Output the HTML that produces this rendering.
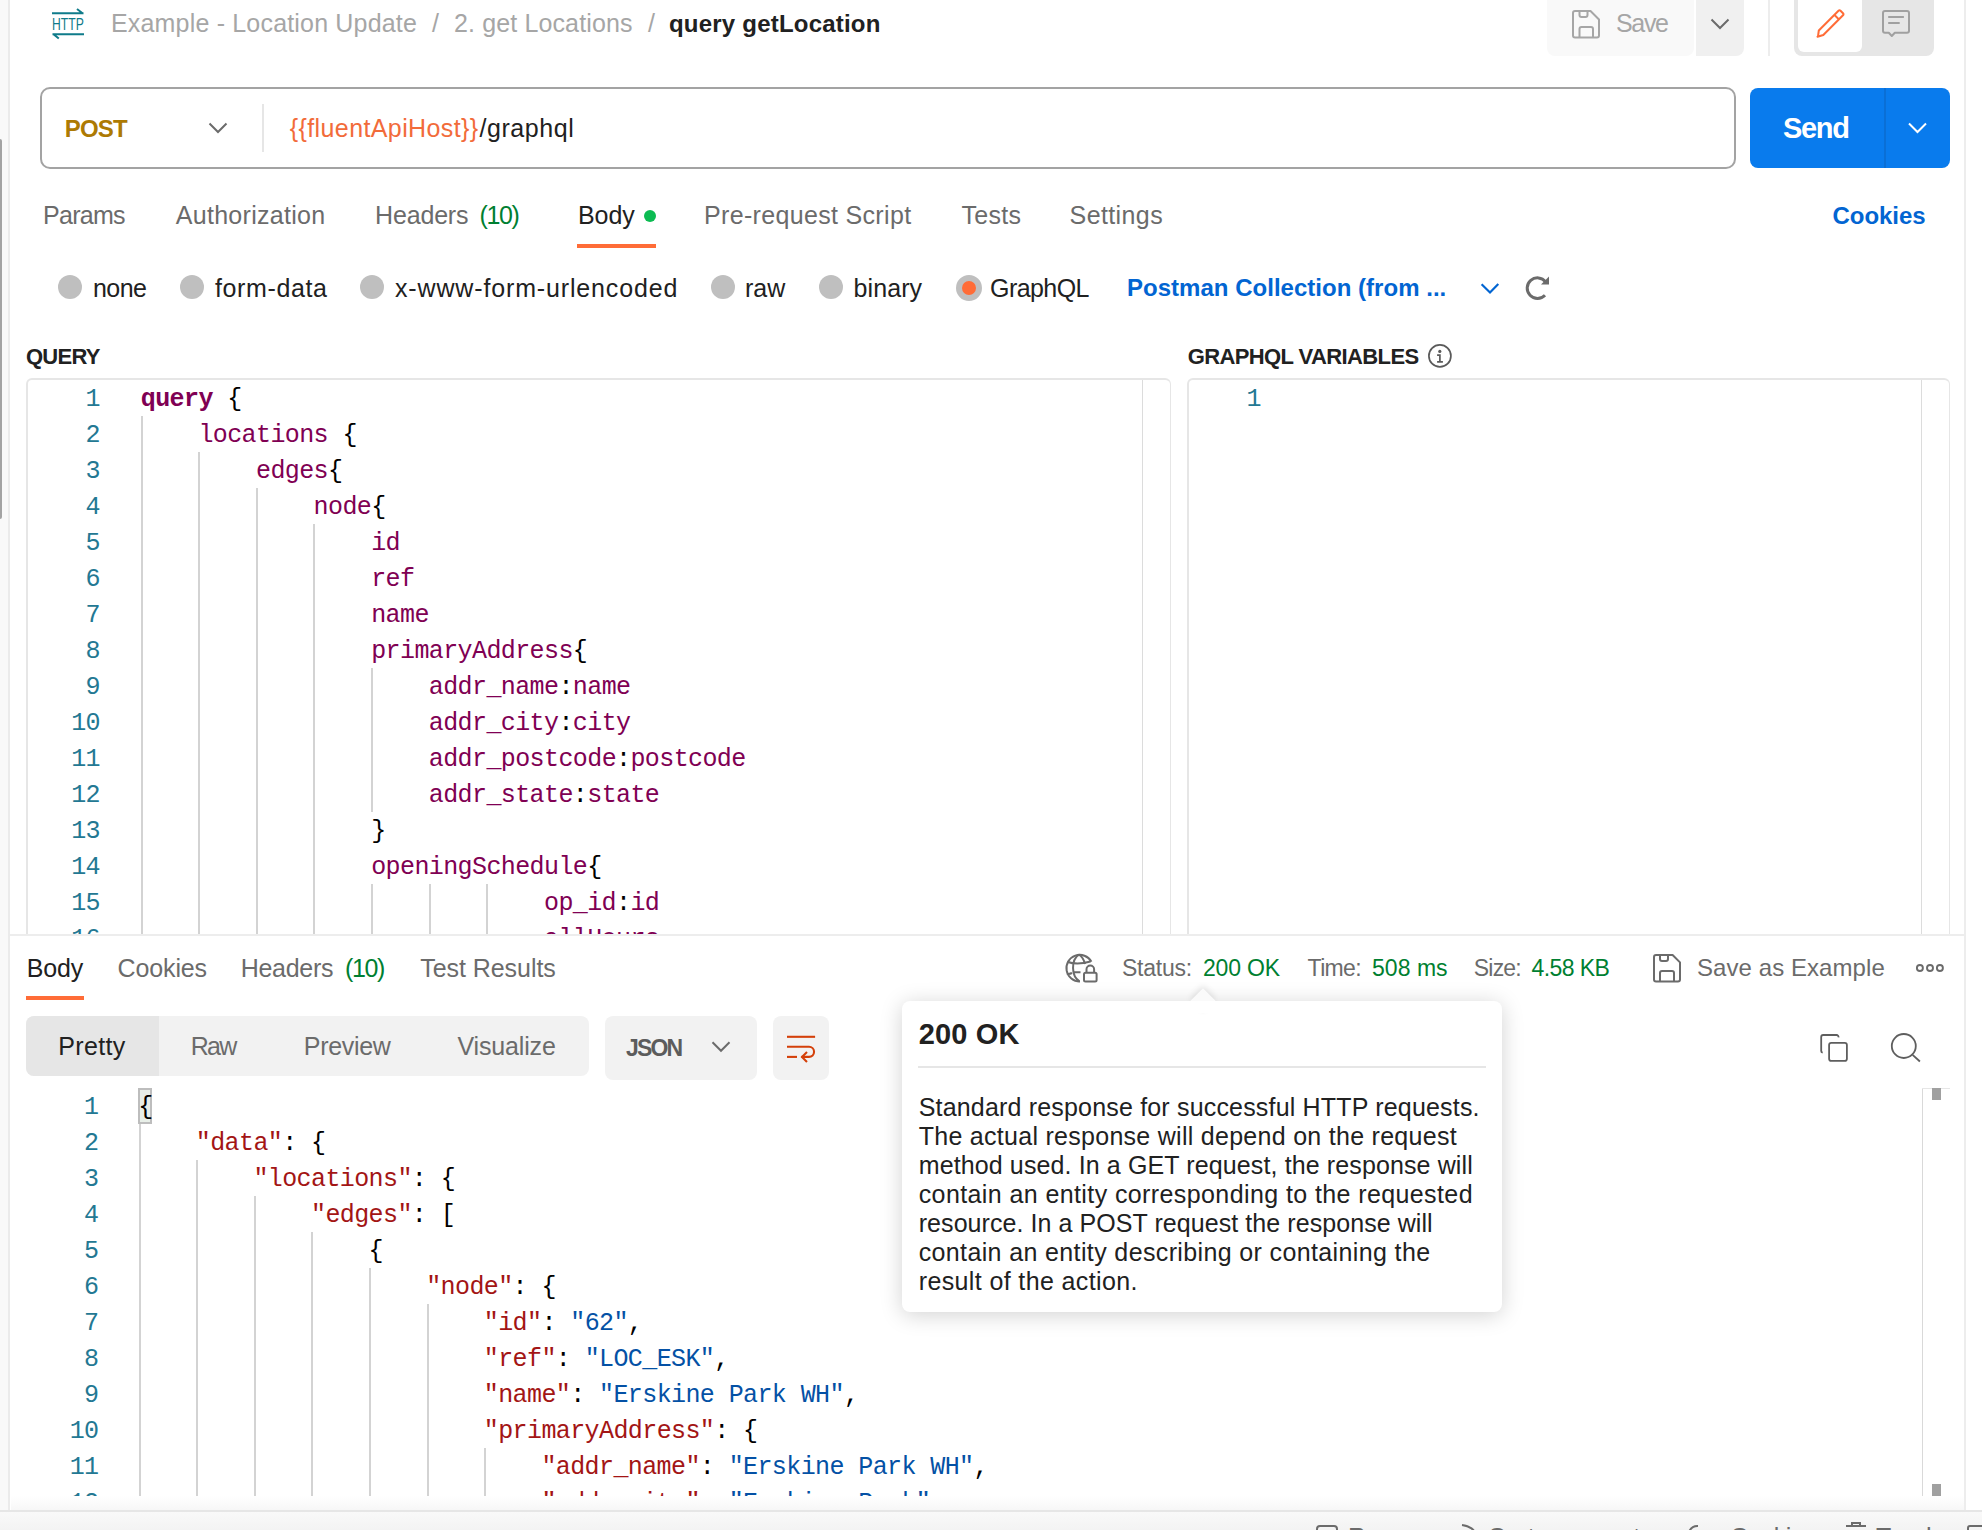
<!DOCTYPE html>
<html><head><meta charset="utf-8">
<style>
*{box-sizing:border-box;margin:0;padding:0}
html,body{width:1982px;height:1530px;overflow:hidden;background:#fff}
body{position:relative;font-family:"Liberation Sans",sans-serif;color:#212121}
.a{position:absolute}
.t{position:absolute;line-height:0;white-space:pre}
svg{position:absolute;overflow:visible}
.m{position:absolute;line-height:0;white-space:pre;font-family:"Liberation Mono",monospace}
</style></head><body>
<div class="a" style="left:0px;top:0px;width:8px;height:1530px;background:#f9f9f9;"></div>
<div class="a" style="left:8px;top:0px;width:2px;height:1530px;background:#ebebeb;"></div>
<div class="a" style="left:0px;top:139px;width:2px;height:380px;background:#a3a3a3;border-radius:0 2px 2px 0"></div>
<div class="a" style="left:1964px;top:0px;width:2px;height:1511px;background:#ededed;"></div>
<div class="a" style="left:1966px;top:0px;width:16px;height:1511px;background:#ffffff;"></div>
<svg style="left:0;top:0" width="100" height="50">
<g fill="none" stroke="#0f7b8a" stroke-width="2">
<path d="M52 13.3H83.5M77 9L82.5 13.3"/>
<path d="M52.5 34.2H84M53.5 34.2L58.8 38.6"/>
</g></svg>
<svg style="left:0;top:0" width="100" height="50"><text x="52" y="30.4" textLength="31.8" lengthAdjust="spacingAndGlyphs" font-family="Liberation Sans" font-size="17.4" fill="#0f7b8a">HTTP</text></svg>
<div class="t" style="left:111.0px;top:23.3px;font-size:25px;color:#a6a6a6;letter-spacing:0.18px">Example - Location Update</div>
<div class="t" style="left:432.0px;top:23.3px;font-size:25px;color:#a6a6a6;letter-spacing:0.00px">/</div>
<div class="t" style="left:454.0px;top:23.3px;font-size:25px;color:#a6a6a6;letter-spacing:0.13px">2. get Locations</div>
<div class="t" style="left:648.0px;top:23.3px;font-size:25px;color:#a6a6a6;letter-spacing:0.00px">/</div>
<div class="t" style="left:669.0px;top:23.7px;font-size:24px;color:#212121;letter-spacing:0.21px;font-weight:bold">query getLocation</div>
<div class="a" style="left:1547px;top:-8px;width:147px;height:64px;background:#f9f9f9;border-radius:8px"></div>
<div class="a" style="left:1696px;top:-8px;width:48px;height:64px;background:#f0f0f0;border-radius:0 8px 8px 0"></div>
<svg style="left:1564px;top:1px" width="50" height="50"><g fill="none" stroke="#a6a6a6" stroke-width="2" stroke-linejoin="round">
<path d="M11 10H26.5L35 18.5V34.6A2 2 0 0 1 33 36.6H11A2 2 0 0 1 9 34.6V12A2 2 0 0 1 11 10Z"/>
<path d="M15.5 10V14A2 2 0 0 0 17.5 16H21.5A2 2 0 0 0 23.5 14V10"/>
<path d="M15.5 36.6V28A2 2 0 0 1 17.5 26H27A2 2 0 0 1 29 28V36.6"/>
</g></svg>
<div class="t" style="left:1616.0px;top:23.3px;font-size:25px;color:#a6a6a6;letter-spacing:-1.33px">Save</div>
<svg style="left:1700px;top:0" width="40" height="50"><path d="M11.5 19.5L20 28L28.5 19.5" fill="none" stroke="#6b6b6b" stroke-width="2"/></svg>
<div class="a" style="left:1768px;top:0px;width:2px;height:56px;background:#ededed;"></div>
<div class="a" style="left:1794px;top:-8px;width:140px;height:64px;background:#e6e6e6;border-radius:8px"></div>
<div class="a" style="left:1798px;top:-8px;width:64px;height:60px;background:#ffffff;border-radius:6px"></div>
<svg style="left:1800px;top:0" width="60" height="50"><g fill="none" stroke="#ff6c37" stroke-width="2" stroke-linejoin="round">
<path d="M18 36.5L18.8 30.5L38.5 10.8Q39.5 9.8 40.5 10.8L43 13.3Q44 14.3 43 15.3L23.3 35L17.5 36.7Z"/>
<path d="M34.5 15L39 19.5"/>
</g></svg>
<svg style="left:1870px;top:0" width="50" height="50"><g fill="none" stroke="#a0a0a0" stroke-width="2" stroke-linejoin="round">
<path d="M15 11H37A2 2 0 0 1 39 13V30.8A2 2 0 0 1 37 32.8H24.8L21.8 36L18.8 32.8H15A2 2 0 0 1 13 30.8V13A2 2 0 0 1 15 11Z"/>
<path d="M18.2 17H33.9M18.2 23H29.7"/>
</g></svg>
<div class="a" style="left:40px;top:87px;width:1696px;height:82px;background:#fff;border:2px solid #a3a3a3;border-radius:10px"></div>
<div class="t" style="left:64.8px;top:128.7px;font-size:24px;color:#ad7a03;letter-spacing:-0.80px;font-weight:bold">POST</div>
<svg style="left:200px;top:110px" width="40" height="40"><path d="M9.5 13.5L18 22L26.5 13.5" fill="none" stroke="#6b6b6b" stroke-width="2"/></svg>
<div class="a" style="left:262px;top:104px;width:2px;height:48px;background:#e6e6e6;"></div>
<div class="t" style="left:289.8px;top:128.3px;font-size:25px;color:#f26b3a;letter-spacing:0.39px">{{fluentApiHost}}</div>
<div class="t" style="left:479.5px;top:128.3px;font-size:25px;color:#212121;letter-spacing:0.56px">/graphql</div>
<div class="a" style="left:1750px;top:88px;width:200px;height:80px;background:#097bed;border-radius:8px"></div>
<div class="a" style="left:1884px;top:88px;width:2px;height:80px;background:#0a6fd6;"></div>
<div class="t" style="left:1783.0px;top:128.0px;font-size:29px;color:#ffffff;letter-spacing:-1.33px;font-weight:bold">Send</div>
<svg style="left:1900px;top:110px" width="40" height="40"><path d="M9 13.5L17.5 22L26 13.5" fill="none" stroke="#ffffff" stroke-width="2"/></svg>
<div class="t" style="left:43.1px;top:215.3px;font-size:25px;color:#6b6b6b;letter-spacing:-0.74px">Params</div>
<div class="t" style="left:175.8px;top:215.3px;font-size:25px;color:#6b6b6b;letter-spacing:0.28px">Authorization</div>
<div class="t" style="left:375.1px;top:215.3px;font-size:25px;color:#6b6b6b;letter-spacing:-0.18px">Headers</div>
<div class="t" style="left:479.5px;top:215.3px;font-size:25px;color:#007f31;letter-spacing:-1.37px">(10)</div>
<div class="t" style="left:578.0px;top:215.3px;font-size:25px;color:#212121;letter-spacing:-0.07px">Body</div>
<div class="a" style="left:644px;top:210px;width:12px;height:12px;border-radius:6px;background:#0cbb52"></div>
<div class="a" style="left:577px;top:244px;width:79px;height:4px;background:#ff6c37;"></div>
<div class="t" style="left:704.0px;top:215.3px;font-size:25px;color:#6b6b6b;letter-spacing:0.33px">Pre-request Script</div>
<div class="t" style="left:961.6px;top:215.3px;font-size:25px;color:#6b6b6b;letter-spacing:0.25px">Tests</div>
<div class="t" style="left:1069.6px;top:215.3px;font-size:25px;color:#6b6b6b;letter-spacing:0.39px">Settings</div>
<div class="t" style="left:1832.5px;top:215.7px;font-size:24px;color:#0265d2;letter-spacing:-0.05px;font-weight:bold">Cookies</div>
<div class="a" style="left:58px;top:275px;width:24px;height:24px;border-radius:12px;background:#bfbfbf"></div>
<div class="a" style="left:180px;top:275px;width:24px;height:24px;border-radius:12px;background:#bfbfbf"></div>
<div class="a" style="left:360px;top:275px;width:24px;height:24px;border-radius:12px;background:#bfbfbf"></div>
<div class="a" style="left:711px;top:275px;width:24px;height:24px;border-radius:12px;background:#bfbfbf"></div>
<div class="a" style="left:819px;top:275px;width:24px;height:24px;border-radius:12px;background:#bfbfbf"></div>
<div class="a" style="left:956px;top:275px;width:26px;height:26px;border-radius:13px;background:#ff6c37;border:6px solid #bfbfbf"></div>
<div class="t" style="left:92.9px;top:287.6px;font-size:25px;color:#212121;letter-spacing:-0.50px">none</div>
<div class="t" style="left:215.0px;top:287.6px;font-size:25px;color:#212121;letter-spacing:0.62px">form-data</div>
<div class="t" style="left:395.0px;top:287.6px;font-size:25px;color:#212121;letter-spacing:0.85px">x-www-form-urlencoded</div>
<div class="t" style="left:745.0px;top:287.6px;font-size:25px;color:#212121;letter-spacing:0.00px">raw</div>
<div class="t" style="left:853.5px;top:287.6px;font-size:25px;color:#212121;letter-spacing:0.10px">binary</div>
<div class="t" style="left:990.0px;top:287.6px;font-size:25px;color:#212121;letter-spacing:-0.57px">GraphQL</div>
<div class="t" style="left:1127.0px;top:288.0px;font-size:24px;color:#0265d2;letter-spacing:0.02px;font-weight:bold">Postman Collection (from ...</div>
<svg style="left:1470px;top:265px" width="40" height="40"><path d="M11.6 19.3L20 27.5L28.3 19" fill="none" stroke="#0265d2" stroke-width="2.2"/></svg>
<svg style="left:1510px;top:265px" width="50" height="40"><path d="M35.6 16.8A10.3 10.3 0 1 0 35 30.2" fill="none" stroke="#6b6b6b" stroke-width="3"/><path d="M39 11.6V19.5H31Z" fill="#6b6b6b"/></svg>
<div class="t" style="left:26.0px;top:356.7px;font-size:22px;color:#212121;letter-spacing:-0.75px;font-weight:bold">QUERY</div>
<div class="t" style="left:1187.7px;top:356.7px;font-size:22px;color:#212121;letter-spacing:-0.61px;font-weight:bold">GRAPHQL VARIABLES</div>
<svg style="left:1420px;top:340px" width="40" height="40"><g fill="none" stroke="#5a5a5a" stroke-width="1.7"><circle cx="19.9" cy="15.9" r="11"/><path d="M17.1 15.2H19.9V21.8M17.1 21.8H22.9"/></g><circle cx="19.8" cy="11.4" r="1.6" fill="#5a5a5a"/></svg>
<div class="a" style="left:0;top:370px;width:1964px;height:564px;overflow:hidden">
<div class="a" style="left:26px;top:8px;width:1145px;height:700px;border:2px solid #e6e6e6;border-right-width:1px;border-bottom:0;border-radius:6px 6px 0 0"></div>
<div class="a" style="left:1187px;top:8px;width:763px;height:700px;border:2px solid #e6e6e6;border-right-width:1px;border-bottom:0;border-radius:6px 6px 0 0"></div>
</div>
<div class="a" style="left:1142px;top:380px;width:1px;height:554px;background:#dcdcdc;"></div>
<div class="a" style="left:1921px;top:380px;width:1px;height:554px;background:#dcdcdc;"></div>
<div class="a" style="left:10px;top:934px;width:1954px;height:2px;background:#ededed;"></div>
<div class="a" style="left:140.5px;top:416px;width:2px;height:518px;background:#d3d3d3;"></div>
<div class="a" style="left:198.1px;top:452px;width:2px;height:482px;background:#d3d3d3;"></div>
<div class="a" style="left:255.7px;top:488px;width:2px;height:446px;background:#d3d3d3;"></div>
<div class="a" style="left:313.3px;top:524px;width:2px;height:410px;background:#d3d3d3;"></div>
<div class="a" style="left:370.9px;top:668px;width:2px;height:144px;background:#d3d3d3;"></div>
<div class="a" style="left:370.9px;top:884px;width:2px;height:50px;background:#d3d3d3;"></div>
<div class="a" style="left:428.5px;top:884px;width:2px;height:50px;background:#d3d3d3;"></div>
<div class="a" style="left:486.1px;top:884px;width:2px;height:50px;background:#d3d3d3;"></div>
<div class="a" style="left:29px;top:380px;width:1113px;height:554px;overflow:hidden">
<div class="m" style="left:56.6px;top:20.0px;font-size:25px;letter-spacing:-0.60px;color:#237893">1</div>
<div class="m" style="left:111.8px;top:20.0px;font-size:25px;letter-spacing:-0.60px;"><span style="color:#800053;font-weight:bold">query</span><span style="color:#000000"> {</span></div>
<div class="m" style="left:56.6px;top:56.0px;font-size:25px;letter-spacing:-0.60px;color:#237893">2</div>
<div class="m" style="left:169.4px;top:56.0px;font-size:25px;letter-spacing:-0.60px;"><span style="color:#800053">locations</span><span style="color:#000000"> {</span></div>
<div class="m" style="left:56.6px;top:92.0px;font-size:25px;letter-spacing:-0.60px;color:#237893">3</div>
<div class="m" style="left:227.0px;top:92.0px;font-size:25px;letter-spacing:-0.60px;"><span style="color:#800053">edges</span><span style="color:#000000">{</span></div>
<div class="m" style="left:56.6px;top:128.0px;font-size:25px;letter-spacing:-0.60px;color:#237893">4</div>
<div class="m" style="left:284.6px;top:128.0px;font-size:25px;letter-spacing:-0.60px;"><span style="color:#800053">node</span><span style="color:#000000">{</span></div>
<div class="m" style="left:56.6px;top:164.0px;font-size:25px;letter-spacing:-0.60px;color:#237893">5</div>
<div class="m" style="left:342.2px;top:164.0px;font-size:25px;letter-spacing:-0.60px;"><span style="color:#800053">id</span></div>
<div class="m" style="left:56.6px;top:200.0px;font-size:25px;letter-spacing:-0.60px;color:#237893">6</div>
<div class="m" style="left:342.2px;top:200.0px;font-size:25px;letter-spacing:-0.60px;"><span style="color:#800053">ref</span></div>
<div class="m" style="left:56.6px;top:236.0px;font-size:25px;letter-spacing:-0.60px;color:#237893">7</div>
<div class="m" style="left:342.2px;top:236.0px;font-size:25px;letter-spacing:-0.60px;"><span style="color:#800053">name</span></div>
<div class="m" style="left:56.6px;top:272.0px;font-size:25px;letter-spacing:-0.60px;color:#237893">8</div>
<div class="m" style="left:342.2px;top:272.0px;font-size:25px;letter-spacing:-0.60px;"><span style="color:#800053">primaryAddress</span><span style="color:#000000">{</span></div>
<div class="m" style="left:56.6px;top:308.0px;font-size:25px;letter-spacing:-0.60px;color:#237893">9</div>
<div class="m" style="left:399.8px;top:308.0px;font-size:25px;letter-spacing:-0.60px;"><span style="color:#800053">addr_name</span><span style="color:#000000">:</span><span style="color:#800053">name</span></div>
<div class="m" style="left:42.2px;top:344.0px;font-size:25px;letter-spacing:-0.60px;color:#237893">10</div>
<div class="m" style="left:399.8px;top:344.0px;font-size:25px;letter-spacing:-0.60px;"><span style="color:#800053">addr_city</span><span style="color:#000000">:</span><span style="color:#800053">city</span></div>
<div class="m" style="left:42.2px;top:380.0px;font-size:25px;letter-spacing:-0.60px;color:#237893">11</div>
<div class="m" style="left:399.8px;top:380.0px;font-size:25px;letter-spacing:-0.60px;"><span style="color:#800053">addr_postcode</span><span style="color:#000000">:</span><span style="color:#800053">postcode</span></div>
<div class="m" style="left:42.2px;top:416.0px;font-size:25px;letter-spacing:-0.60px;color:#237893">12</div>
<div class="m" style="left:399.8px;top:416.0px;font-size:25px;letter-spacing:-0.60px;"><span style="color:#800053">addr_state</span><span style="color:#000000">:</span><span style="color:#800053">state</span></div>
<div class="m" style="left:42.2px;top:452.0px;font-size:25px;letter-spacing:-0.60px;color:#237893">13</div>
<div class="m" style="left:342.2px;top:452.0px;font-size:25px;letter-spacing:-0.60px;"><span style="color:#000000">}</span></div>
<div class="m" style="left:42.2px;top:488.0px;font-size:25px;letter-spacing:-0.60px;color:#237893">14</div>
<div class="m" style="left:342.2px;top:488.0px;font-size:25px;letter-spacing:-0.60px;"><span style="color:#800053">openingSchedule</span><span style="color:#000000">{</span></div>
<div class="m" style="left:42.2px;top:524.0px;font-size:25px;letter-spacing:-0.60px;color:#237893">15</div>
<div class="m" style="left:515.0px;top:524.0px;font-size:25px;letter-spacing:-0.60px;"><span style="color:#800053">op_id</span><span style="color:#000000">:</span><span style="color:#800053">id</span></div>
<div class="m" style="left:42.2px;top:560.0px;font-size:25px;letter-spacing:-0.60px;color:#237893">16</div>
<div class="m" style="left:515.0px;top:560.0px;font-size:25px;letter-spacing:-0.60px;"><span style="color:#800053">allHours</span></div>
</div>
<div class="m" style="left:1246.6px;top:400.0px;font-size:25px;letter-spacing:-0.60px;color:#237893">1</div>
<div class="t" style="left:26.7px;top:967.6px;font-size:25px;color:#212121;letter-spacing:-0.13px">Body</div>
<div class="a" style="left:26px;top:996px;width:58px;height:4px;background:#ff6c37;"></div>
<div class="t" style="left:117.5px;top:967.6px;font-size:25px;color:#6b6b6b;letter-spacing:-0.12px">Cookies</div>
<div class="t" style="left:240.7px;top:967.6px;font-size:25px;color:#6b6b6b;letter-spacing:-0.28px">Headers</div>
<div class="t" style="left:345.0px;top:967.6px;font-size:25px;color:#007f31;letter-spacing:-1.40px">(10)</div>
<div class="t" style="left:420.2px;top:967.6px;font-size:25px;color:#6b6b6b;letter-spacing:-0.05px">Test Results</div>
<svg style="left:1055px;top:945px" width="50" height="45"><g fill="none" stroke="#6b6b6b" stroke-width="2" stroke-linejoin="round">
<path d="M25 36.5A13.3 13.3 0 1 1 36.4 16.8"/>
<path d="M23.8 9.5C16 15 16 31 24.5 36.3"/>
<path d="M23.8 9.5C27 11.5 29 15 30 19"/>
<path d="M12.3 16.8C18 19 27 19 35.5 16.5"/>
<path d="M12 28.6C14 29.5 17 28 17 28M18 27.3H25.5"/>
<rect x="29" y="27.8" width="12.6" height="8.8" rx="1.5"/>
<path d="M31.5 27.8V24.3A3.8 3.8 0 0 1 39.1 24.3V27.8"/>
</g></svg>
<div class="t" style="left:1122.0px;top:968.0px;font-size:23px;color:#6b6b6b;letter-spacing:-0.25px">Status:</div>
<div class="t" style="left:1203.0px;top:968.0px;font-size:23px;color:#007f31;letter-spacing:-0.18px">200 OK</div>
<div class="t" style="left:1307.6px;top:968.0px;font-size:23px;color:#6b6b6b;letter-spacing:-0.65px">Time:</div>
<div class="t" style="left:1372.0px;top:968.0px;font-size:23px;color:#007f31;letter-spacing:0.04px">508 ms</div>
<div class="t" style="left:1473.8px;top:968.0px;font-size:23px;color:#6b6b6b;letter-spacing:-0.80px">Size:</div>
<div class="t" style="left:1531.5px;top:968.0px;font-size:23px;color:#007f31;letter-spacing:-0.58px">4.58 KB</div>
<svg style="left:1645px;top:945px" width="50" height="45"><g fill="none" stroke="#6b6b6b" stroke-width="2" stroke-linejoin="round">
<path d="M11 10H27.6L35 17.4V34.6A2 2 0 0 1 33 36.6H11A2 2 0 0 1 9 34.6V12A2 2 0 0 1 11 10Z"/>
<path d="M15 10V14A2 2 0 0 0 17 16H21A2 2 0 0 0 23 14V10"/>
<path d="M15 36.6V28A2 2 0 0 1 17 26H27A2 2 0 0 1 29 28V36.6"/>
</g></svg>
<div class="t" style="left:1697.0px;top:967.7px;font-size:24px;color:#6b6b6b;letter-spacing:0.07px">Save as Example</div>
<svg style="left:1905px;top:955px" width="50" height="30"><g fill="none" stroke="#6b6b6b" stroke-width="1.9">
<circle cx="14.9" cy="13" r="3"/><circle cx="25" cy="13" r="3"/><circle cx="34.9" cy="13" r="3"/>
</g></svg>
<div class="a" style="left:26px;top:1016px;width:563px;height:60px;background:#f2f2f2;border-radius:8px"></div>
<div class="a" style="left:26px;top:1016px;width:133px;height:60px;background:#e6e6e6;border-radius:8px 0 0 8px"></div>
<div class="t" style="left:58.3px;top:1045.5px;font-size:25px;color:#212121;letter-spacing:0.34px">Pretty</div>
<div class="t" style="left:190.7px;top:1045.5px;font-size:25px;color:#6b6b6b;letter-spacing:-1.65px">Raw</div>
<div class="t" style="left:303.8px;top:1045.5px;font-size:25px;color:#6b6b6b;letter-spacing:-0.30px">Preview</div>
<div class="t" style="left:457.4px;top:1045.5px;font-size:25px;color:#6b6b6b;letter-spacing:-0.14px">Visualize</div>
<div class="a" style="left:605px;top:1016px;width:152px;height:64px;background:#f2f2f2;border-radius:8px"></div>
<div class="t" style="left:626.0px;top:1048.0px;font-size:23px;color:#5c5c5c;letter-spacing:-1.83px;font-weight:bold">JSON</div>
<svg style="left:700px;top:1030px" width="40" height="40"><path d="M12.5 12.3L21 20.8L29.5 12.3" fill="none" stroke="#6b6b6b" stroke-width="2"/></svg>
<div class="a" style="left:773px;top:1016px;width:56px;height:64px;background:#f2f2f2;border-radius:8px"></div>
<svg style="left:770px;top:1012px" width="60" height="70"><g fill="none" stroke="#d4400a" stroke-width="2.1">
<path d="M17 24.8H45.1"/>
<path d="M17 34.8H39A5 5 0 0 1 39 44.9H31.5"/>
<path d="M17 44.9H27"/>
<path d="M37 40L32 44.9L37 50"/>
</g></svg>
<svg style="left:1810px;top:1020px" width="60" height="50"><g fill="none" stroke="#5e5e5e" stroke-width="1.8" stroke-linejoin="round">
<path d="M12.7 32.7A1.8 1.8 0 0 1 11.2 30.9V17A2 2 0 0 1 13.2 15H26.5A2 2 0 0 1 28.5 17.4"/>
<rect x="19.1" y="22.9" width="17.8" height="18" rx="2.2"/>
<circle cx="93.8" cy="26" r="12" transform="translate(0 0)"/>
<path d="M102.6 34.8L109.9 41.5"/>
</g></svg>
<div class="a" style="left:138.5px;top:1124px;width:2px;height:372px;background:#d3d3d3;"></div>
<div class="a" style="left:196.1px;top:1160px;width:2px;height:336px;background:#d3d3d3;"></div>
<div class="a" style="left:253.7px;top:1196px;width:2px;height:300px;background:#d3d3d3;"></div>
<div class="a" style="left:311.3px;top:1232px;width:2px;height:264px;background:#d3d3d3;"></div>
<div class="a" style="left:368.9px;top:1268px;width:2px;height:228px;background:#d3d3d3;"></div>
<div class="a" style="left:426.5px;top:1304px;width:2px;height:192px;background:#d3d3d3;"></div>
<div class="a" style="left:484.1px;top:1448px;width:2px;height:48px;background:#d3d3d3;"></div>
<div class="a" style="left:138px;top:1088px;width:14px;height:36px;background:#e8efe8;border:2px solid #bdbdbd"></div>
<div class="a" style="left:11px;top:1088px;width:1911px;height:408px;overflow:hidden">
<div class="m" style="left:73.1px;top:20.0px;font-size:25px;letter-spacing:-0.60px;color:#237893">1</div>
<div class="m" style="left:127.2px;top:20.0px;font-size:25px;letter-spacing:-0.60px;"><span style="color:#000000">{</span></div>
<div class="m" style="left:73.1px;top:56.0px;font-size:25px;letter-spacing:-0.60px;color:#237893">2</div>
<div class="m" style="left:184.8px;top:56.0px;font-size:25px;letter-spacing:-0.60px;"><span style="color:#a31515">&quot;data&quot;</span><span style="color:#000000">: {</span></div>
<div class="m" style="left:73.1px;top:92.0px;font-size:25px;letter-spacing:-0.60px;color:#237893">3</div>
<div class="m" style="left:242.4px;top:92.0px;font-size:25px;letter-spacing:-0.60px;"><span style="color:#a31515">&quot;locations&quot;</span><span style="color:#000000">: {</span></div>
<div class="m" style="left:73.1px;top:128.0px;font-size:25px;letter-spacing:-0.60px;color:#237893">4</div>
<div class="m" style="left:300.0px;top:128.0px;font-size:25px;letter-spacing:-0.60px;"><span style="color:#a31515">&quot;edges&quot;</span><span style="color:#000000">: [</span></div>
<div class="m" style="left:73.1px;top:164.0px;font-size:25px;letter-spacing:-0.60px;color:#237893">5</div>
<div class="m" style="left:357.6px;top:164.0px;font-size:25px;letter-spacing:-0.60px;"><span style="color:#000000">{</span></div>
<div class="m" style="left:73.1px;top:200.0px;font-size:25px;letter-spacing:-0.60px;color:#237893">6</div>
<div class="m" style="left:415.2px;top:200.0px;font-size:25px;letter-spacing:-0.60px;"><span style="color:#a31515">&quot;node&quot;</span><span style="color:#000000">: {</span></div>
<div class="m" style="left:73.1px;top:236.0px;font-size:25px;letter-spacing:-0.60px;color:#237893">7</div>
<div class="m" style="left:472.8px;top:236.0px;font-size:25px;letter-spacing:-0.60px;"><span style="color:#a31515">&quot;id&quot;</span><span style="color:#000000">: </span><span style="color:#0451a5">&quot;62&quot;</span><span style="color:#000000">,</span></div>
<div class="m" style="left:73.1px;top:272.0px;font-size:25px;letter-spacing:-0.60px;color:#237893">8</div>
<div class="m" style="left:472.8px;top:272.0px;font-size:25px;letter-spacing:-0.60px;"><span style="color:#a31515">&quot;ref&quot;</span><span style="color:#000000">: </span><span style="color:#0451a5">&quot;LOC_ESK&quot;</span><span style="color:#000000">,</span></div>
<div class="m" style="left:73.1px;top:308.0px;font-size:25px;letter-spacing:-0.60px;color:#237893">9</div>
<div class="m" style="left:472.8px;top:308.0px;font-size:25px;letter-spacing:-0.60px;"><span style="color:#a31515">&quot;name&quot;</span><span style="color:#000000">: </span><span style="color:#0451a5">&quot;Erskine Park WH&quot;</span><span style="color:#000000">,</span></div>
<div class="m" style="left:58.7px;top:344.0px;font-size:25px;letter-spacing:-0.60px;color:#237893">10</div>
<div class="m" style="left:472.8px;top:344.0px;font-size:25px;letter-spacing:-0.60px;"><span style="color:#a31515">&quot;primaryAddress&quot;</span><span style="color:#000000">: {</span></div>
<div class="m" style="left:58.7px;top:380.0px;font-size:25px;letter-spacing:-0.60px;color:#237893">11</div>
<div class="m" style="left:530.4px;top:380.0px;font-size:25px;letter-spacing:-0.60px;"><span style="color:#a31515">&quot;addr_name&quot;</span><span style="color:#000000">: </span><span style="color:#0451a5">&quot;Erskine Park WH&quot;</span><span style="color:#000000">,</span></div>
<div class="m" style="left:58.7px;top:416.0px;font-size:25px;letter-spacing:-0.60px;color:#237893">12</div>
<div class="m" style="left:530.4px;top:416.0px;font-size:25px;letter-spacing:-0.60px;"><span style="color:#a31515">&quot;addr_city&quot;</span><span style="color:#000000">: </span><span style="color:#0451a5">&quot;Erskine Park&quot;</span><span style="color:#000000">,</span></div>
</div>
<div class="a" style="left:1922px;top:1088px;width:1px;height:408px;background:#d9d9d9;"></div>
<div class="a" style="left:1922px;top:1088px;width:28px;height:1px;background:#e6e6e6;"></div>
<div class="a" style="left:1932px;top:1088px;width:9px;height:12px;background:#a0a0a0;"></div>
<div class="a" style="left:1932px;top:1484px;width:9px;height:12px;background:#a0a0a0;"></div>
<div class="a" style="left:11px;top:1496px;width:1953px;height:14px;background:linear-gradient(#ffffff,#f7f7f7)"></div>
<div class="a" style="left:0px;top:1510px;width:1982px;height:2px;background:#e6e6e6;"></div>
<div class="a" style="left:0;top:1512px;width:1982px;height:18px;background:linear-gradient(#f9f9f9,#f3f3f3)"></div>
<svg style="left:1300px;top:1500px" width="682" height="30"><g fill="none" stroke="#6b6b6b" stroke-width="2">
<rect x="17" y="26" width="20" height="16" rx="3"/>
<path d="M162 25C170 26 175 30 175 34"/>
<path d="M398 26A9 9 0 0 0 390 40"/>
<path d="M546 26H566M552 26V23H560V26"/>
<rect x="668" y="26" width="20" height="16" rx="2"/>
</g></svg>
<div class="t" style="left:1348.0px;top:1536.8px;font-size:25px;color:#6b6b6b;letter-spacing:2.00px">Runner</div>
<div class="t" style="left:1487.5px;top:1536.8px;font-size:25px;color:#6b6b6b;letter-spacing:-1.90px">Capture requests</div>
<div class="t" style="left:1730.0px;top:1536.8px;font-size:25px;color:#6b6b6b;letter-spacing:-0.67px">Cookies</div>
<div class="t" style="left:1876.0px;top:1536.8px;font-size:25px;color:#6b6b6b;letter-spacing:0.25px">Trash</div>
<div class="a" style="left:902px;top:1001px;width:600px;height:311px;background:#fff;border-radius:8px;box-shadow:0 3px 22px rgba(0,0,0,0.18)"></div>
<div class="a" style="left:1193.5px;top:992px;width:18px;height:18px;background:#fafafa;transform:rotate(45deg);box-shadow:-2px -2px 6px rgba(0,0,0,0.10)"></div>
<div class="a" style="left:1180px;top:1001px;width:46px;height:12px;background:#fff"></div>
<div class="t" style="left:918.7px;top:1034.2px;font-size:29px;color:#212121;letter-spacing:0.16px;font-weight:bold">200 OK</div>
<div class="a" style="left:918px;top:1066px;width:568px;height:2px;background:#e6e6e6;"></div>
<div class="t" style="left:918.7px;top:1107.3px;font-size:25px;color:#212121;letter-spacing:0.18px">Standard response for successful HTTP requests.</div>
<div class="t" style="left:918.7px;top:1136.3px;font-size:25px;color:#212121;letter-spacing:0.28px">The actual response will depend on the request</div>
<div class="t" style="left:918.7px;top:1165.3px;font-size:25px;color:#212121;letter-spacing:0.12px">method used. In a GET request, the response will</div>
<div class="t" style="left:918.7px;top:1194.3px;font-size:25px;color:#212121;letter-spacing:0.40px">contain an entity corresponding to the requested</div>
<div class="t" style="left:918.7px;top:1223.3px;font-size:25px;color:#212121;letter-spacing:0.07px">resource. In a POST request the response will</div>
<div class="t" style="left:918.7px;top:1252.3px;font-size:25px;color:#212121;letter-spacing:0.37px">contain an entity describing or containing the</div>
<div class="t" style="left:918.7px;top:1281.3px;font-size:25px;color:#212121;letter-spacing:0.38px">result of the action.</div>
</body></html>
